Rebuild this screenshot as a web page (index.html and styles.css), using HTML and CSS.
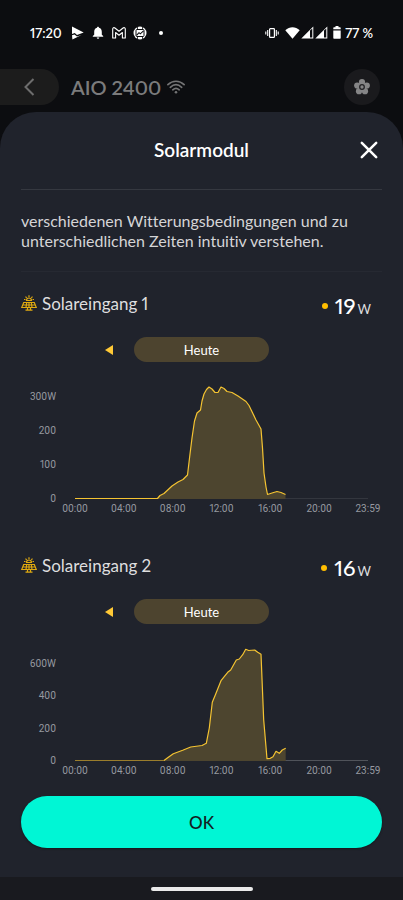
FILE: index.html
```html
<!DOCTYPE html>
<html lang="de">
<head>
<meta charset="utf-8">
<meta name="viewport" content="width=device-width, initial-scale=1">
<title>Solarmodul</title>
<link rel="stylesheet" href="styles.css">
</head>
<body>
<svg class="defs" aria-hidden="true">
  <symbol id="solar" viewBox="0 0 16 16">
    <g fill="none" stroke="currentColor" stroke-width="1.200">
      <path d="M5.500 5.500a2.500 2.500 0 0 1 5 0zM3 4.500h1.500M11.500 4.500H13M8 .2v1.800M4.500 1.600l1.200 1.200M11.500 1.600l-1.200 1.200"/>
      <path d="M2.700 7.500h10.600l2 5H.7zM1.600 10h12.800M5.700 7.500l-.7 5M10.300 7.500l.7 5M8 7.500v5M4.500 15.200h7M6.500 12.500v2.500M9.500 12.500v2.500"/>
    </g>
  </symbol>
</svg>
<header class="top">
  <div class="status">
    <div class="status-side">
      <span class="clock">17:20</span>
      <svg class="s-play" width="13" height="14" viewBox="0 0 13 14"><path fill="#fff" d="M1 .5 12.700 6.600 6 9.100 3.800 7 1 8z"/><path fill="#fff" d="M1 9.300 3.500 8.400 6 10.500 10.500 8.900 1.400 13.500z"/></svg>
      <svg class="s-bell" width="12" height="14" viewBox="0 0 12 14"><path fill="#fff" d="M6 .8c.7 0 1 .5 1 1C9 2.300 9.800 4 9.800 6v2.800L11.200 10v.8H.8V10l1.400-1.200V6C2.200 4 3 2.300 5 1.800c0-.5.3-1 1-1zM4.700 11.500h2.600a1.300 1.300 0 0 1-2.600 0z"/></svg>
      <svg class="s-mail" width="14" height="12" viewBox="0 0 14 12"><path fill="none" stroke="#fff" stroke-width="1.100" stroke-linejoin="round" d="M.7 11V2C.7.8 2 .3 2.900 1L7 4.200 11.100 1c.9-.7 2.200-.2 2.200 1v9h-2.900V5.500L7 8.200 3.600 5.500V11z"/></svg>
      <svg class="s-round" width="14" height="14" viewBox="0 0 14 14"><circle cx="7" cy="7" r="6.500" fill="#fff"/><g fill="none" stroke="#0c0d10"><rect x="3" y="3.500" width="8" height="7" rx="1"/><path stroke-width=".8" d="M4.500 3.500V.8M9.500 3.500V.8M4.500 10.500v2.700M9.500 10.500v2.700"/><path stroke-width="1.100" d="M3.500 9.300 6 6.700l1.300 1.100 3.200-3"/></g></svg>
      <span class="s-dot"></span>
    </div>
    <div class="status-side right">
      <svg width="14" height="12" viewBox="0 0 14 12"><g fill="none" stroke="#fff"><rect x="4.600" y="1.600" width="4.800" height="8.800" rx=".7" stroke-width="1.200"/><path d="M2.700 3v6M11.300 3v6M.8 4.500v3M13.200 4.500v3" stroke-width="1.100"/></g></svg>
      <svg class="s-wifi" width="15" height="12" viewBox="0 0 15 12"><path fill="#fff" d="M.3 3.200C4.500-.8 10.500-.8 14.700 3.200L7.500 11.800z"/></svg>
      <svg width="13" height="13" viewBox="0 0 13 13"><path fill="#fff" fill-rule="evenodd" d="M12.300.5v12H.3zm-3.300 4V11.500h2.300V2.500z"/></svg>
      <svg width="13" height="13" viewBox="0 0 13 13"><path fill="#fff" fill-rule="evenodd" d="M12.300.5v12H.3zm-3.300 4V11.500h2.300V2.500z"/></svg>
      <svg class="s-bat" width="8" height="13" viewBox="0 0 8 13"><path fill="#fff" d="M2.500 0h3v1.200H7q.7 0 .7.700v1.300H.3V1.900q0-.7.7-.7h1.500zM.3 4.400h7.400V12q0 .7-.7.700H1q-.7 0-.7-.7z"/></svg>
      <span class="percent">77 %</span>
    </div>
  </div>
  <div class="device">
    <button class="back" aria-label="Zurück"><svg width="11" height="18" viewBox="0 0 11 18"><path fill="none" stroke="#6d6d6d" stroke-width="2" d="M9.500 1 1.500 9l8 8"/></svg></button>
    <h1>AIO 2400</h1>
    <svg class="wifi" width="18" height="14" viewBox="0 0 18 14"><g fill="none" stroke="#747475" stroke-width="1.700" stroke-linecap="round"><path d="M.9 4.700c4.800-4.600 11.400-4.600 16.200 0M3.300 7.300c3.500-3.200 7.900-3.200 11.400 0M5.800 9.800c2-1.700 4.400-1.700 6.400 0"/></g><circle cx="9" cy="12.200" r="1.300" fill="#747475"/></svg>
    <button class="gear" aria-label="Einstellungen"><svg width="18" height="18" viewBox="0 0 18 18"><g fill="#858586"><circle cx="9" cy="4" r="3.100"/><circle cx="4.200" cy="7.500" r="3.100"/><circle cx="13.800" cy="7.500" r="3.100"/><circle cx="6" cy="13.200" r="3.100"/><circle cx="12" cy="13.200" r="3.100"/><circle cx="9" cy="9" r="4.500"/></g><circle cx="9" cy="9" r="2.300" fill="#858586" stroke="#222225" stroke-width="1.300"/></svg></button>
  </div>
</header>
<main class="sheet">
  <div class="sheet-head">
    <h2>Solarmodul</h2>
    <button class="close" aria-label="Schließen"><svg width="18" height="18" viewBox="0 0 18 18"><path stroke="#fff" stroke-width="2.500" stroke-linecap="round" d="m1.800 1.800 14.400 14.400M16.200 1.800 1.800 16.200"/></svg></button>
  </div>
  <p class="intro">verschiedenen Witterungsbedingungen und zu unterschiedlichen Zeiten intuitiv verstehen.</p>

  <section class="input">
    <div class="input-head">
      <svg class="solar"><use href="#solar"/></svg>
      <h3>Solareingang 1</h3>
      <p class="power"><i class="dot"></i><strong>19</strong><span>W</span></p>
    </div>
    <div class="day">
      <button class="prev" aria-label="Vorheriger Tag"><svg width="8" height="10" viewBox="0 0 8 10"><path fill="#ffc936" d="M8 0v10L0 5z"/></svg></button>
      <button class="today">Heute</button>
    </div>
    <div class="chart">
      <div class="y-axis first"><span>300W</span><span>200</span><span>100</span><span>0</span></div>
      <svg class="plot" viewBox="75 379 293 120" preserveAspectRatio="none">
        <path class="axis" d="M75 498.500H368"/>
        <path class="area" d="M157.500 499 160 495.500 164 493.500 172 486 178 482 183 479.500 187.500 475 190 454 192 438 194.500 421 197 413 200.500 410 202 401 204 394 206.500 389.500 209 387 212 389 215 392.500H218L221 387 224 388.500 227 391.500 232 392.500 238 396 246 401.500 249 405.500 256 420 261 429 262.500 448 264 473 266 487 267.500 494.500 272 493 277 491.500 281 492.500 285.500 494.500V499z"/>
        <path class="line" d="M75 498.500H157.500L160 495.500 164 493.500 172 486 178 482 183 479.500 187.500 475 190 454 192 438 194.500 421 197 413 200.500 410 202 401 204 394 206.500 389.500 209 387 212 389 215 392.500H218L221 387 224 388.500 227 391.500 232 392.500 238 396 246 401.500 249 405.500 256 420 261 429 262.500 448 264 473 266 487 267.500 494.500 272 493 277 491.500 281 492.500 285.500 494.500"/>
      </svg>
      <div class="x-axis"><span>00:00</span><span>04:00</span><span>08:00</span><span>12:00</span><span>16:00</span><span>20:00</span><span>23:59</span></div>
    </div>
  </section>

  <section class="input">
    <div class="input-head">
      <svg class="solar"><use href="#solar"/></svg>
      <h3>Solareingang 2</h3>
      <p class="power"><i class="dot"></i><strong>16</strong><span>W</span></p>
    </div>
    <div class="day">
      <button class="prev" aria-label="Vorheriger Tag"><svg width="8" height="10" viewBox="0 0 8 10"><path fill="#ffc936" d="M8 0v10L0 5z"/></svg></button>
      <button class="today">Heute</button>
    </div>
    <div class="chart">
      <div class="y-axis second"><span>600W</span><span>400</span><span>200</span><span>0</span></div>
      <svg class="plot" viewBox="75 641 293 120" preserveAspectRatio="none">
        <path class="axis strong" d="M75 760.500H368"/>
        <path class="area" d="M164 761 168 757.500 173.300 753.700 182.700 750.300 190.700 747 202 745.500 206.300 743.300 209.300 728 212.300 702.300 215.300 695 221 680.700 227.700 672.300 230.700 670 236.300 660 239.300 659 242.700 654.700 245.700 649.300 248.700 650.500 254.700 650 257.700 652.300 261 654.300 263.700 720 267 758.700 270.300 758.300 273 756.700 276 751.300 279.300 753.300 282.300 750 285.700 748.300V761z"/>
        <path class="line" d="M164 760.500 168 757.500 173.300 753.700 182.700 750.300 190.700 747 202 745.500 206.300 743.300 209.300 728 212.300 702.300 215.300 695 221 680.700 227.700 672.300 230.700 670 236.300 660 239.300 659 242.700 654.700 245.700 649.300 248.700 650.500 254.700 650 257.700 652.300 261 654.300 263.700 720 267 758.700 270.300 758.300 273 756.700 276 751.300 279.300 753.300 282.300 750 285.700 748.300"/>
        <path class="line muted" d="M75 760.500H164"/>
      </svg>
      <div class="x-axis"><span>00:00</span><span>04:00</span><span>08:00</span><span>12:00</span><span>16:00</span><span>20:00</span><span>23:59</span></div>
    </div>
  </section>
  <button class="ok">OK</button>
</main>
<footer class="nav"><span class="handle"></span></footer>
</body>
</html>
```
FILE: styles.css
```css
* { box-sizing: border-box; }
body {
  margin: 0;
  min-height: 100vh;
  display: flex;
  flex-direction: column;
  background: #0c0d10;
  color: #fff;
  font-family: Lato, "Liberation Sans", sans-serif;
  font-variant-ligatures: none;
  font-variant-numeric: proportional-nums;
}
h1, h2, h3, p { margin: 0; font-weight: 400; }
button { border: 0; padding: 0; background: none; color: inherit; font: inherit; cursor: pointer; }
svg { display: block; flex: none; }
.defs { position: absolute; width: 0; height: 0; }

.top { height: 112px; padding-top: 20px; }
.status { display: flex; justify-content: space-between; align-items: center; height: 25px; padding: 0 30px; }
.status-side { display: flex; align-items: center; }
.clock { width: 41px; font-size: 13px; font-weight: 600; }
.s-bell { margin-left: 8px; }
.s-mail { margin-left: 8px; }
.s-round { margin-left: 7px; }
.s-dot { width: 4px; height: 4px; margin-left: 12px; border-radius: 50%; background: #fff; }
.right { gap: 1px; }
.s-wifi { margin-left: 5px; }
.s-bat { margin-left: 4px; }
.percent { margin-left: 3px; font-size: 13px; font-weight: 600; white-space: nowrap; }

.device { display: flex; align-items: center; height: 36px; margin-top: 24px; padding-right: 23px; }
.back { display: flex; align-items: center; justify-content: center; width: 59px; height: 36px; border-radius: 0 18px 18px 0; background: #1c1c1c; }
.device h1 { margin-left: 12px; font-size: 20px; font-weight: 600; color: #7b7b7c; }
.wifi { margin-left: 6px; }
.gear { display: flex; align-items: center; justify-content: center; width: 36px; height: 36px; margin-left: auto; border-radius: 50%; background: #1a1a1d; }

.sheet {
  flex: 1;
  display: flex;
  flex-direction: column;
  padding: 0 21px 29px;
  border-radius: 36px 36px 0 0;
  background: #20232c;
}
.sheet-head { display: grid; grid-template-columns: 1fr auto 1fr; align-items: center; height: 78px; padding-bottom: 2px; border-bottom: 1px solid #353840; }
.sheet-head h2 { grid-column: 2; font-size: 19px; font-weight: 600; }
.close { justify-self: end; margin-right: 4px; }
.intro { padding: 21px 0 20px; border-bottom: 1px solid #262932; font-size: 16px; line-height: 20px; color: #d5d5d7; }

.input { height: 262px; }
.input-head { display: flex; align-items: center; height: 65px; padding-bottom: 3px; }
.solar { width: 16px; height: 16px; color: #e0aa10; }
.input-head h3 { margin-left: 5px; font-size: 17px; color: #dededf; }
.power { display: flex; align-items: baseline; margin: 5px 11px 0 auto; }
.dot { align-self: center; width: 6px; height: 6px; margin-right: 7px; border-radius: 50%; background: #ffbe00; }
.power strong { font-size: 22px; font-weight: 500; }
.power span { margin-left: 2px; font-size: 13px; color: #dededf; }
.day { display: grid; grid-template-columns: 1fr 135px 1fr; align-items: center; height: 25px; }
.prev { justify-self: end; margin-right: 21px; }
.today { height: 25px; border-radius: 13px; background: #4d442f; font-size: 13px; }

.chart {
  display: grid;
  grid-template-columns: 35px minmax(0, 1fr);
  column-gap: 19px;
  margin: 17px 14px 0 0;
  font-family: Roboto, sans-serif;
  font-size: 10px;
  line-height: 12px;
  color: #9699a0;
}
.y-axis { display: flex; flex-direction: column; justify-content: space-between; align-items: flex-end; height: 126px; }
.first { padding-top: 12px; }
.second { padding-top: 17px; }
.plot { width: 100%; height: 120px; }
.x-axis { grid-column: 2; display: flex; justify-content: space-between; margin: -2px -14px 0; }
.x-axis span { width: 28px; text-align: center; }
.axis { fill: none; stroke: #33363e; stroke-width: 1; }
.strong { stroke: #50535a; }
.area { fill: #4d452f; }
.line { fill: none; stroke: #f5c432; stroke-width: 1.200; stroke-linejoin: round; }
.muted { stroke: #9a7d2c; }

.ok { height: 52px; border-radius: 26px; background: #00f6d5; color: #14201f; font-size: 17px; font-weight: 500; box-shadow: 0 1px 2px #15171c; }
.nav { display: flex; align-items: center; justify-content: center; height: 23px; background: #191a1f; }
.handle { width: 102px; height: 4px; border-radius: 2px; background: #eaeaea; }
```
